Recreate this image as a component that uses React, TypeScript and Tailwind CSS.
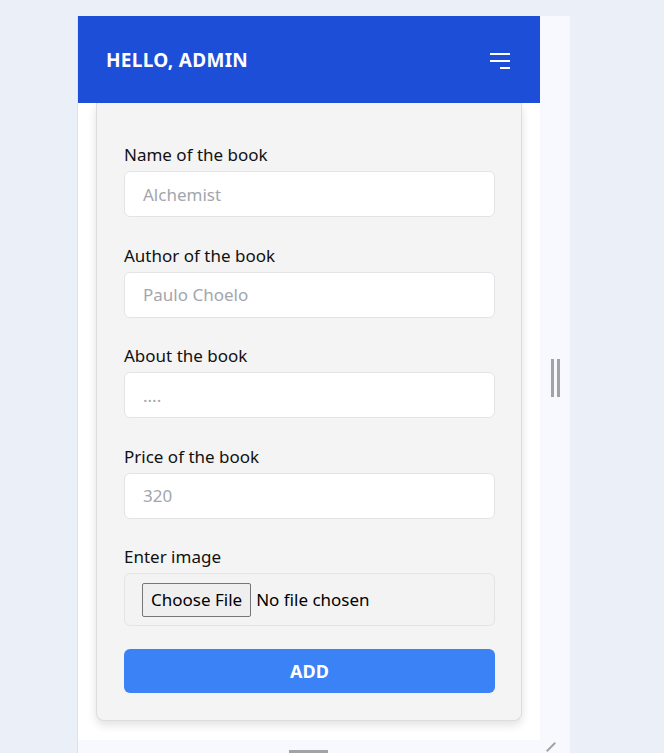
import { useState } from "react"

interface FieldProps {
	label: string
	placeholder: string
	name: string
}

function Field({ label, placeholder, name }: FieldProps) {
	return (
		<div className="flex flex-col gap-[6px]">
			<label htmlFor={name} className="text-[17px] leading-[21px] text-[#111]">
				{label}
			</label>
			<input
				id={name}
				placeholder={placeholder}
				className="h-[46px] w-full rounded-md border border-[#e2e4e8] bg-white px-[18px] text-[17px] text-[#333] outline-none placeholder:text-[#a3a6ad]"
			/>
		</div>
	)
}

function MenuIcon() {
	return (
		<svg width="22" height="18" viewBox="0 0 22 18" fill="none" stroke="white" strokeWidth="2">
			<line x1="1" y1="2" x2="21" y2="2" />
			<line x1="1" y1="9" x2="21" y2="9" />
			<line x1="11" y1="16" x2="21" y2="16" />
		</svg>
	)
}

export default function App() {
	const [fileName] = useState<string | null>(null)

	return (
		<div
			className="min-h-[753px] bg-[#ebeff8] pl-[77px] pt-[16px]"
			style={{ fontFamily: '"Noto Sans", "Open Sans", sans-serif' }}
		>
			<div className="w-[493px] border-l border-[#dde2ea] bg-[#f7f9fe]">
				<div className="flex">
					{/* page viewport */}
					<div className="h-[724px] w-[462px] overflow-hidden bg-white">
						<header className="relative z-10 flex h-[87px] items-center justify-between bg-[#1d4ed8] pl-[28px] pr-[29px] pt-[2px]">
							<h1 className="text-[19px] font-bold tracking-[0.3px] text-white">HELLO, ADMIN</h1>
							<MenuIcon />
						</header>

						<div className="px-[18px]">
							<form className="flex flex-col gap-[27.5px] rounded-b-lg border-x border-b border-[#dcdde0] bg-[#f4f4f4] pb-[27px] pl-[27px] pr-[26px] pt-[41px] shadow-[0_4px_10px_rgba(0,0,0,0.12)]">
								<Field label="Name of the book" placeholder="Alchemist" name="name" />
								<Field label="Author of the book" placeholder="Paulo Choelo" name="author" />
								<Field label="About the book" placeholder="...." name="about" />
								<Field label="Price of the book" placeholder="320" name="price" />

								<div className="flex flex-col gap-[6px]">
									<label htmlFor="image" className="text-[17px] leading-[21px] text-[#111]">
										Enter image
									</label>
									<div className="flex h-[53px] items-center rounded-md border border-[#e2e4e8] bg-[#f3f3f3] px-[17px]">
										<button
											type="button"
											className="h-[34px] rounded-[2px] border border-[#767676] bg-[#efefef] px-[8px] text-[17px] text-black"
										>
											Choose File
										</button>
										<span className="ml-[5px] text-[17px] text-black">{fileName ?? "No file chosen"}</span>
									</div>
								</div>

								<button
									type="button"
									className="-mt-[4.5px] h-[44px] rounded-md bg-[#3b82f6] text-[18px] font-bold text-white"
								>
									ADD
								</button>
							</form>
						</div>
					</div>

					{/* side resize handle */}
					<div className="flex w-[30px] items-start justify-center pt-[343px]">
						<div className="flex gap-[3px]">
							<div className="h-[38px] w-[3px] bg-[#a3a3a3]" />
							<div className="h-[38px] w-[3px] bg-[#a3a3a3]" />
						</div>
					</div>
				</div>

				{/* bottom resize handle */}
				<div className="relative flex h-[20px] justify-center pr-[31px]">
					<div className="mt-[10px] h-[3px] w-[39px] bg-[#a3a3a3]" />
					<div className="absolute right-[13px] top-[6px] h-[2px] w-[12px] -rotate-45 bg-[#a3a3a3]" />
				</div>
			</div>
		</div>
	)
}
